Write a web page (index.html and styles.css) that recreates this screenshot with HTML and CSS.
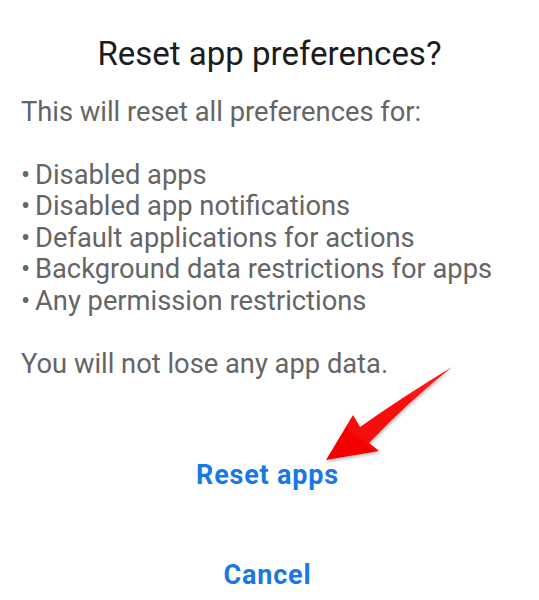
FILE: index.html
```html
<!DOCTYPE html>
<html>
<head>
<meta charset="utf-8">
<link rel="stylesheet" href="styles.css">
</head>
<body>
<div class="dialog">
  <h1 class="title">Reset app preferences?</h1>
  <div class="message">
    <p>This will reset all preferences for:</p>
    <p class="blank">&nbsp;</p>
    <p class="item"><span class="dot">•</span><span>Disabled apps</span></p>
    <p class="item"><span class="dot">•</span><span>Disabled app notifications</span></p>
    <p class="item"><span class="dot">•</span><span>Default applications for actions</span></p>
    <p class="item"><span class="dot">•</span><span>Background data restrictions for apps</span></p>
    <p class="item"><span class="dot">•</span><span>Any permission restrictions</span></p>
    <p class="blank">&nbsp;</p>
    <p>You will not lose any app data.</p>
  </div>
  <div class="actions">
    <button class="btn btn-reset">Reset apps</button>
    <button class="btn btn-cancel">Cancel</button>
  </div>
  <svg class="arrow" viewBox="0 0 170 120" width="170" height="120">
    <defs>
      <linearGradient id="g" x1="0" y1="1" x2="1" y2="0">
        <stop offset="0" stop-color="#f20000"/>
        <stop offset="1" stop-color="#ff1a1a"/>
      </linearGradient>
      <filter id="s" x="-20%" y="-20%" width="140%" height="140%">
        <feDropShadow dx="1" dy="2" stdDeviation="1.5" flood-color="#000" flood-opacity="0.25"/>
      </filter>
    </defs>
    <path d="M152 17 Q104 46 60 77 L53 65 L26 110 L79 101 L69 93 Q108 52 152 17 Z" fill="url(#g)" filter="url(#s)"/>
  </svg>
</div>
</body>
</html>
```
FILE: styles.css
```css
html, body {
  margin: 0;
  padding: 0;
  background: #ffffff;
}
body {
  width: 539px;
  height: 600px;
  overflow: hidden;
  font-family: Roboto, "Noto Sans", sans-serif;
}
.dialog {
  position: relative;
  width: 539px;
  height: 600px;
}
.title {
  margin: 0;
  padding-top: 34px;
  font-size: 33px;
  line-height: 40px;
  font-weight: 400;
  color: #1c1c1c;
  text-align: center;
}
.message {
  margin-top: 22.5px;
  padding-left: 21px;
  font-size: 27.3px;
  line-height: 31.5px;
  color: #656565;
}
.message p {
  margin: 0;
  white-space: nowrap;
}
.item {
  display: flex;
}
.dot {
  flex: 0 0 14px;
  width: 14px;
}
.actions {
  display: flex;
  flex-direction: column;
  align-items: center;
  margin-top: 79px;
  padding-right: 4px;
  gap: 68px;
}
.btn {
  border: none;
  background: none;
  padding: 0;
  font-family: Roboto, "Noto Sans", sans-serif;
  font-size: 27px;
  line-height: 32px;
  font-weight: 700;
  letter-spacing: 0.8px;
  color: #1a78e6;
}
.arrow {
  position: absolute;
  left: 300px;
  top: 350px;
  overflow: visible;
}
```
